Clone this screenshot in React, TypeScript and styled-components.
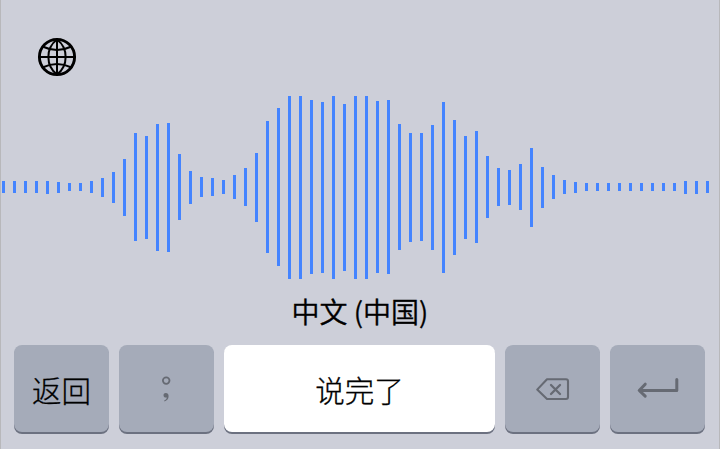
import React from "react";
import styled, { createGlobalStyle } from "styled-components";

const GlobalStyle = createGlobalStyle`
  * { box-sizing: border-box; }
  body { margin: 0; background: #cdcfd9; }
`;

const Panel = styled.main`
  width: 720px;
  height: 449px;
  display: flex;
  flex-direction: column;
  overflow: hidden;
  background: #cdcfd9;
  border: solid #b8b8bb;
  border-width: 0 1px;
  color: #000;
  font-family: "Noto Sans CJK SC", sans-serif;
`;

const Header = styled.header`
  height: 96px;
  padding: 37px 0 0 36px;
`;

const LanguageButton = styled.button`
  display: block;
  width: 40px;
  height: 40px;
  padding: 0;
  border: 0;
  background: none;
  color: #000;

  svg { display: block; }
`;

const Waveform = styled.div`
  height: 183px;
  display: flex;
  align-items: flex-start;
  gap: 8px;
  padding-left: 1px;
`;

const Bar = styled.span<{ $top: number; $bottom: number }>`
  flex: 0 0 3px;
  height: ${(p) => p.$bottom - p.$top}px;
  margin-top: ${(p) => p.$top}px;
  background: #4484ff;
`;

const Language = styled.div`
  height: 66px;
  padding-top: 12px;
  text-align: center;
  font-size: 28px;
  font-weight: 350;
  line-height: 40px;
  -webkit-text-stroke: 0.35px #000;
`;

const Keys = styled.div`
  display: grid;
  grid-template-columns: 95px 95px 271px 95px 95px;
  gap: 10px;
  padding-left: 13px;
`;

const Key = styled.button<{ $primary?: boolean }>`
  height: 87px;
  padding: 1px 0 0;
  display: flex;
  align-items: center;
  justify-content: center;
  border: 0;
  border-radius: 8px;
  background: ${(p) => (p.$primary ? "#fff" : "#a5abb9")};
  box-shadow: 0 2px 0 #6c7180;
  color: #000;
  font-family: "Noto Sans CJK SC", sans-serif;
  font-size: 29.5px;
  font-weight: 300;
  line-height: 40px;
  -webkit-text-stroke: 0.3px #000;
`;

const IconKey = styled(Key)`
  padding: 0;
  color: #666a73;
`;

const BARS: [number, number][] = [
  [181, 193], [181, 193], [181, 193], [181, 193], [181, 194], [182, 193], [183, 191], [183, 191],
  [181, 193], [178, 197], [172, 203], [159, 216], [133, 241], [136, 239], [124, 251], [123, 252],
  [154, 220], [171, 204], [177, 197], [178, 196], [180, 194], [175, 199], [168, 206], [153, 222],
  [121, 253], [108, 266], [96, 279], [96, 279], [100, 274], [102, 273], [96, 279], [104, 271],
  [96, 279], [96, 279], [101, 273], [100, 274], [124, 250], [133, 242], [133, 241], [125, 250],
  [102, 273], [120, 255], [136, 239], [131, 243], [156, 218], [168, 206], [170, 205], [164, 210],
  [148, 227], [167, 208], [175, 199], [180, 194], [182, 193], [183, 191], [183, 191], [183, 191],
  [183, 191], [183, 191], [183, 191], [183, 191], [183, 191], [183, 191], [181, 194], [181, 194],
  [181, 193],
];
const WAVE_TOP = 96;

const Globe = () => (
  <svg width="40" height="40" viewBox="0 0 40 40" fill="none" stroke="currentColor">
    <circle cx="20" cy="20" r="17.6" strokeWidth="2.9" />
    <path d="M20 2v36M2 20h36" strokeWidth="2" />
    <path d="M20 2.5C8.500 11 8.500 29 20 37.500M20 2.500C31.500 11 31.500 29 20 37.500" strokeWidth="2" />
    <path d="M5.500 9.500Q20 16.500 34.500 9.500M5.500 30.500Q20 23.500 34.500 30.500" strokeWidth="2" />
  </svg>
);

const Punctuation = () => (
  <svg width="95" height="87" viewBox="0 0 95 87">
    <circle cx="47.200" cy="35.600" r="3.300" fill="none" stroke="currentColor" strokeWidth="1.800" />
    <path d="M46.800 48c1.700 0 2.800 1.200 2.800 3.100 0 2.800-1.500 4.500-4 5.400l-.5-1c1.700-.8 2.600-1.700 2.700-3.100-.3.100-.6.200-.9.200-1.400 0-2.400-.9-2.400-2.300s1-2.300 2.300-2.300z" fill="currentColor" />
  </svg>
);

const Backspace = () => (
  <svg width="95" height="87" viewBox="0 0 95 87" fill="none" stroke="currentColor" strokeLinecap="round" strokeLinejoin="round">
    <path d="M42 34.200H61q2 0 2 2V52q0 2-2 2H42L32.200 44.600z" strokeWidth="2.100" />
    <path d="M46 40l9 9M55 40l-9 9" strokeWidth="2.300" />
  </svg>
);

const Return = () => (
  <svg width="95" height="87" viewBox="0 0 95 87" fill="none" stroke="currentColor" strokeLinecap="round" strokeLinejoin="round">
    <path d="M66.800 34.500V45.500H29.500M35.200 39.200L29.200 45.500L35.200 51.200" strokeWidth="3" />
  </svg>
);

export default function App() {
  return (
    <>
      <GlobalStyle />
      <Panel>
        <Header>
          <LanguageButton aria-label="Language"><Globe /></LanguageButton>
        </Header>
        <Waveform>
          {BARS.map(([top, bottom], i) => (
            <Bar key={i} $top={top - WAVE_TOP} $bottom={bottom - WAVE_TOP} />
          ))}
        </Waveform>
        <Language>中文 (中国)</Language>
        <Keys>
          <Key>返回</Key>
          <IconKey aria-label="Punctuation"><Punctuation /></IconKey>
          <Key $primary>说完了</Key>
          <IconKey aria-label="Backspace"><Backspace /></IconKey>
          <IconKey aria-label="Return"><Return /></IconKey>
        </Keys>
      </Panel>
    </>
  );
}
